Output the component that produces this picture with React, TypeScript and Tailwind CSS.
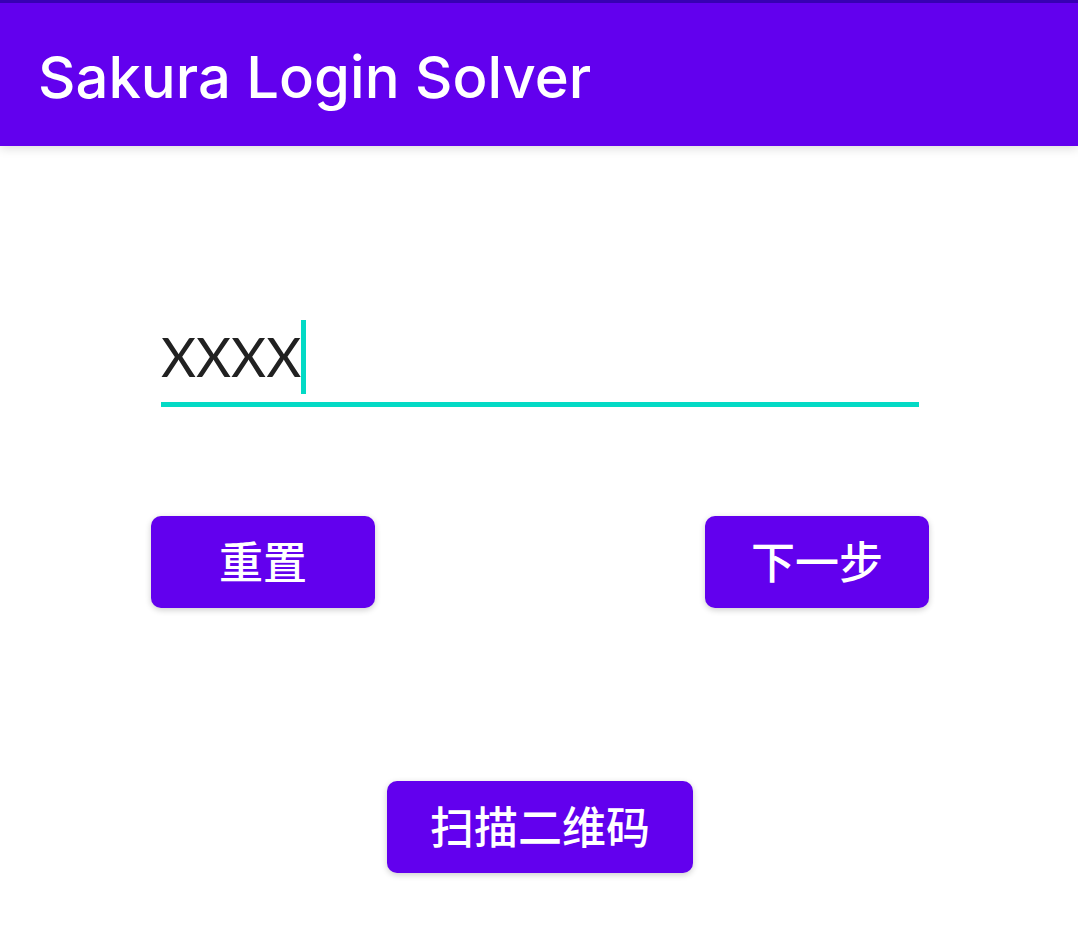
import React from "react";

const buttonClass =
  "h-[92px] cursor-pointer rounded-[10px] bg-[#6200ee] text-[44px] leading-none font-medium text-white shadow-[0_2px_6px_rgba(0,0,0,0.2)]";

export default function App() {
  const [code, setCode] = React.useState("XXXX");

  return (
    <div className="min-h-screen bg-white font-['Lato','Noto_Sans_CJK_SC',sans-serif]">
      <header className="flex h-[146px] items-center border-t-3 border-[#3700b3] bg-[#6200ee] px-[38px] shadow-[0_2px_10px_rgba(0,0,0,0.15)]">
        <h1 className="pt-1.5 font-['Inter',sans-serif] text-[58px] font-medium text-white">Sakura Login Solver</h1>
      </header>
      <main className="mx-auto flex max-w-[780px] flex-col pt-[174px] pl-0.5">
        <div className="mx-[10px] flex h-[87px] items-start border-b-5 border-[#03dac5]">
          <input
            aria-label="Login code"
            value={code}
            onChange={(event) => setCode(event.target.value)}
            className="field-sizing-content h-[74px] bg-transparent pb-0.5 text-[54px] text-[#212121] caret-[#03dac5] outline-none"
          />
          <span aria-hidden="true" className="h-[74px] w-[5px] bg-[#03dac5]" />
        </div>
        <div className="mt-[109px] flex justify-between">
          <button type="button" className={`w-[224px] ${buttonClass}`} onClick={() => setCode("")}>
            重置
          </button>
          <button type="button" className={`w-[224px] ${buttonClass}`}>
            下一步
          </button>
        </div>
        <button type="button" className={`mt-[173px] w-[306px] self-center ${buttonClass}`}>
          扫描二维码
        </button>
      </main>
    </div>
  );
}
